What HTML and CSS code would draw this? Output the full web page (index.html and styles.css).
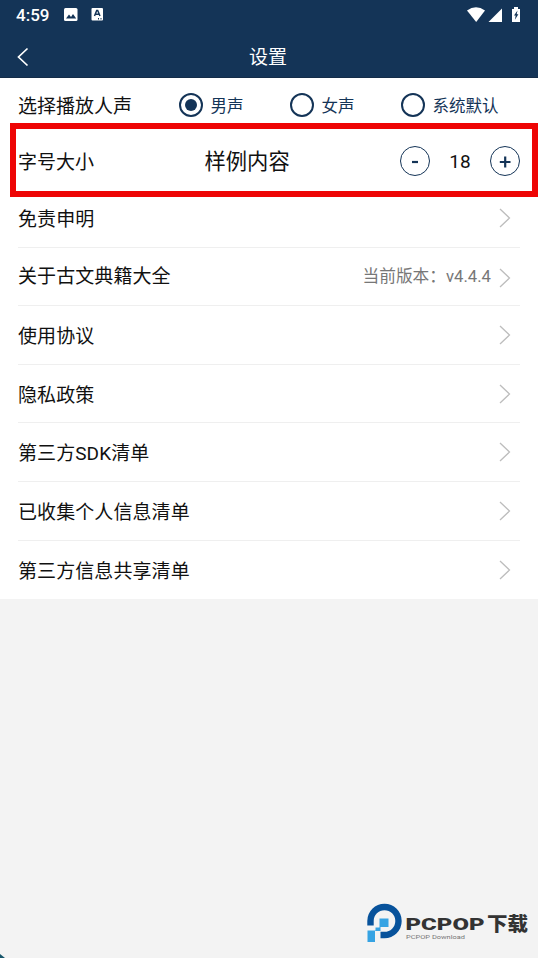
FILE: index.html
```html
<!DOCTYPE html>
<html lang="zh-CN">
<head>
<meta charset="utf-8">
<title>设置</title>
<link rel="stylesheet" href="styles.css">
</head>
<body>
<div class="screen">
  <header class="header">
    <div class="status">
      <span class="clock">4:59</span>
      <svg class="status-left" width="42" height="16" viewBox="0 0 42 16">
        <rect x="1" y="1" width="13.500" height="13" rx="1.500" fill="#fff"/>
        <path d="M3 11.500l3-4 2 2.400 2-2.900 3.200 4.500z" fill="#143457"/>
        <rect x="28.500" y="1" width="11.500" height="12.500" rx="1" fill="#fff"/>
        <path d="M31.500 9L33.700 3.500h1l2.300 5.500M32.500 7.200h3.500M35 11.700h1M37.500 11.700h1" fill="none" stroke="#143457" stroke-width="1.500"/>
      </svg>
      <svg class="status-right" width="56" height="18" viewBox="0 0 56 18">
        <path d="M0 5.500Q9-1 18 5.500L9.200 17z" fill="#fff"/>
        <path d="M35 3.500V17H21.500z" fill="#fff"/>
        <path d="M45 4h2V2h4v2h2v13h-8z" fill="#fff"/>
        <path d="M50.500 5.500l-3.500 5h1.700l-.8 4.200 3.500-5.500h-1.700z" fill="#143457"/>
      </svg>
    </div>
    <div class="titlebar">
      <svg class="back" width="12" height="20" viewBox="0 0 12 20"><path d="M10.500 1.500L1.500 10l9 8.500" fill="none" stroke="#fff" stroke-width="1.700"/></svg>
      <h1>设置</h1>
    </div>
  </header>
  <main class="settings">
    <section class="voice">
      <span class="label">选择播放人声</span>
      <div class="options">
        <div class="option"><i class="radio checked"></i>男声</div>
        <div class="option"><i class="radio"></i>女声</div>
        <div class="option"><i class="radio"></i>系统默认</div>
      </div>
    </section>
    <section class="size">
      <span class="label">字号大小</span>
      <span class="sample">样例内容</span>
      <div class="stepper">
        <span class="step"><svg width="14" height="14" viewBox="0 0 14 14"><path d="M4 8h6" stroke="#143457" stroke-width="2.200"/></svg></span>
        <span class="value">18</span>
        <span class="step"><svg width="14" height="14" viewBox="0 0 14 14"><path d="M1.800 8h10.700M7.200 2.500v11" stroke="#143457" stroke-width="2.200"/></svg></span>
      </div>
    </section>
    <ul class="links">
      <li><span>免责申明</span><svg class="arrow" viewBox="0 0 12 20"><path d="M1 1l9.500 9L1 19"/></svg></li>
      <li class="about"><span>关于古文典籍大全</span><span class="version">当前版本：v4.4.4</span><svg class="arrow" viewBox="0 0 12 20"><path d="M1 1l9.500 9L1 19"/></svg></li>
      <li><span>使用协议</span><svg class="arrow" viewBox="0 0 12 20"><path d="M1 1l9.500 9L1 19"/></svg></li>
      <li><span>隐私政策</span><svg class="arrow" viewBox="0 0 12 20"><path d="M1 1l9.500 9L1 19"/></svg></li>
      <li><span>第三方SDK清单</span><svg class="arrow" viewBox="0 0 12 20"><path d="M1 1l9.500 9L1 19"/></svg></li>
      <li><span>已收集个人信息清单</span><svg class="arrow" viewBox="0 0 12 20"><path d="M1 1l9.500 9L1 19"/></svg></li>
      <li><span>第三方信息共享清单</span><svg class="arrow" viewBox="0 0 12 20"><path d="M1 1l9.500 9L1 19"/></svg></li>
    </ul>
  </main>
  <div class="highlight"></div>
  <svg class="watermark" width="170" height="44" viewBox="0 0 170 44">
    <path d="M3.500 26V21A14 14 0 1 1 17.500 35H13.500" fill="none" stroke="#07529b" stroke-width="6.400"/>
    <path d="M0 25.500H10V29H8V42H0z" fill="#f3f3f3"/>
    <path d="M12.500 18.500h9v8.500h-8v4H8V42H.5V30.500h8V27.500h4z" fill="#36a3e3"/>
    <text class="brand" x="38.500" y="29.500" textLength="79" lengthAdjust="spacingAndGlyphs">PCPOP</text>
    <text class="brand-cn" x="120" y="30.500" textLength="41" lengthAdjust="spacingAndGlyphs">下载</text>
    <text class="brand-sub" x="39" y="38.800" textLength="59" lengthAdjust="spacingAndGlyphs">PCPOP Download</text>
  </svg>
  <svg class="corner" width="5" height="4" viewBox="0 0 5 4"><path d="M0 0l5 4H0z" fill="#17566b"/></svg>
</div>
</body>
</html>
```
FILE: styles.css
```css
* { box-sizing: border-box; }

body {
  margin: 0;
  background: #f3f3f3;
  color: #111;
  font-family: Roboto, "Noto Sans CJK SC", sans-serif;
  font-size: 19px;
}

.screen {
  position: relative;
  height: 958px;
  overflow: hidden;
}

.header {
  height: 78px;
  background: #143457;
  border-bottom: 1px solid #142c48;
  color: #fff;
}

.status {
  display: flex;
  align-items: center;
  height: 30px;
  padding: 0 17px 0 16px;
}

.clock {
  width: 47px;
  font-size: 17px;
  font-weight: 500;
}

.status-right { margin-left: auto; margin-right: -2px; margin-top: -3px; }

.titlebar {
  display: grid;
  grid-template-columns: 38px 1fr 38px;
  align-items: center;
  height: 47px;
  padding: 6px 0 0;
}

.back { margin-left: 17px; }

h1 {
  margin: 0;
  padding: 2px 2px 0 0;
  font-size: 19px;
  font-weight: 400;
  line-height: 28px;
  text-align: center;
}

.settings {
  height: 521px;
  padding: 0 18px;
  background: #fff;
}

.voice {
  display: flex;
  align-items: center;
  height: 54px;
}

.label {
  flex: none;
  padding-bottom: 1px;
  white-space: nowrap;
}

.options {
  display: grid;
  grid-template-columns: 111px 111px auto;
  margin-left: 47px;
}

.option {
  display: flex;
  align-items: center;
  gap: 7.500px;
  color: #143457;
  font-size: 16.500px;
  white-space: nowrap;
}

.radio {
  display: grid;
  place-items: center;
  width: 24px;
  height: 24px;
  border: 2.500px solid #143457;
  border-radius: 50%;
}

.checked::before {
  width: 12px;
  height: 12px;
  border-radius: 50%;
  background: #143457;
  content: "";
}

.size {
  display: flex;
  align-items: center;
  height: 57px;
}

.sample {
  margin-left: 110.500px;
  padding-bottom: 2px;
  font-size: 21.300px;
}

.stepper {
  display: flex;
  align-items: center;
  margin-left: auto;
}

.step {
  display: grid;
  place-items: center;
  width: 30px;
  height: 30px;
  border: 1px solid #143457;
  border-radius: 50%;
}

.value { width: 60px; padding-top: 1px; text-align: center; }

.links {
  margin: 0;
  padding: 0;
  list-style: none;
}

.links li {
  display: flex;
  align-items: center;
  height: 58.600px;
  border-bottom: 1px solid #efefef;
}

.links li:last-child { border: 0; }

.links li > span:first-child { padding-bottom: 1px; letter-spacing: 0.080px; }

.links .about > span:first-child { padding-bottom: 4px; }

.arrow {
  width: 12px;
  height: 20px;
  margin-left: auto;
  margin-right: 9px;
  fill: none;
  stroke: #bdbdbd;
  stroke-width: 1.300;
}

.version {
  margin-left: auto;
  padding-bottom: 2px;
  color: #777;
  font-size: 16.700px;
}

.about .arrow { margin-top: 3px; margin-left: 8px; }

.highlight {
  position: absolute;
  top: 123px;
  left: 10px;
  width: 530px;
  height: 74px;
  border: 6px solid #ee0505;
  border-right-width: 8px;
}

.watermark {
  position: absolute;
  top: 900px;
  left: 367px;
}

.brand {
  fill: #333;
  font-family: Roboto, sans-serif;
  font-size: 17px;
  font-weight: 900;
}

.brand-cn {
  fill: #333;
  font-family: "Noto Sans CJK SC", sans-serif;
  font-size: 19px;
  font-weight: 900;
}

.brand-sub {
  fill: #777;
  font-family: Roboto, sans-serif;
  font-size: 5.300px;
}

.corner {
  position: absolute;
  bottom: 0;
  left: 0;
}
```
